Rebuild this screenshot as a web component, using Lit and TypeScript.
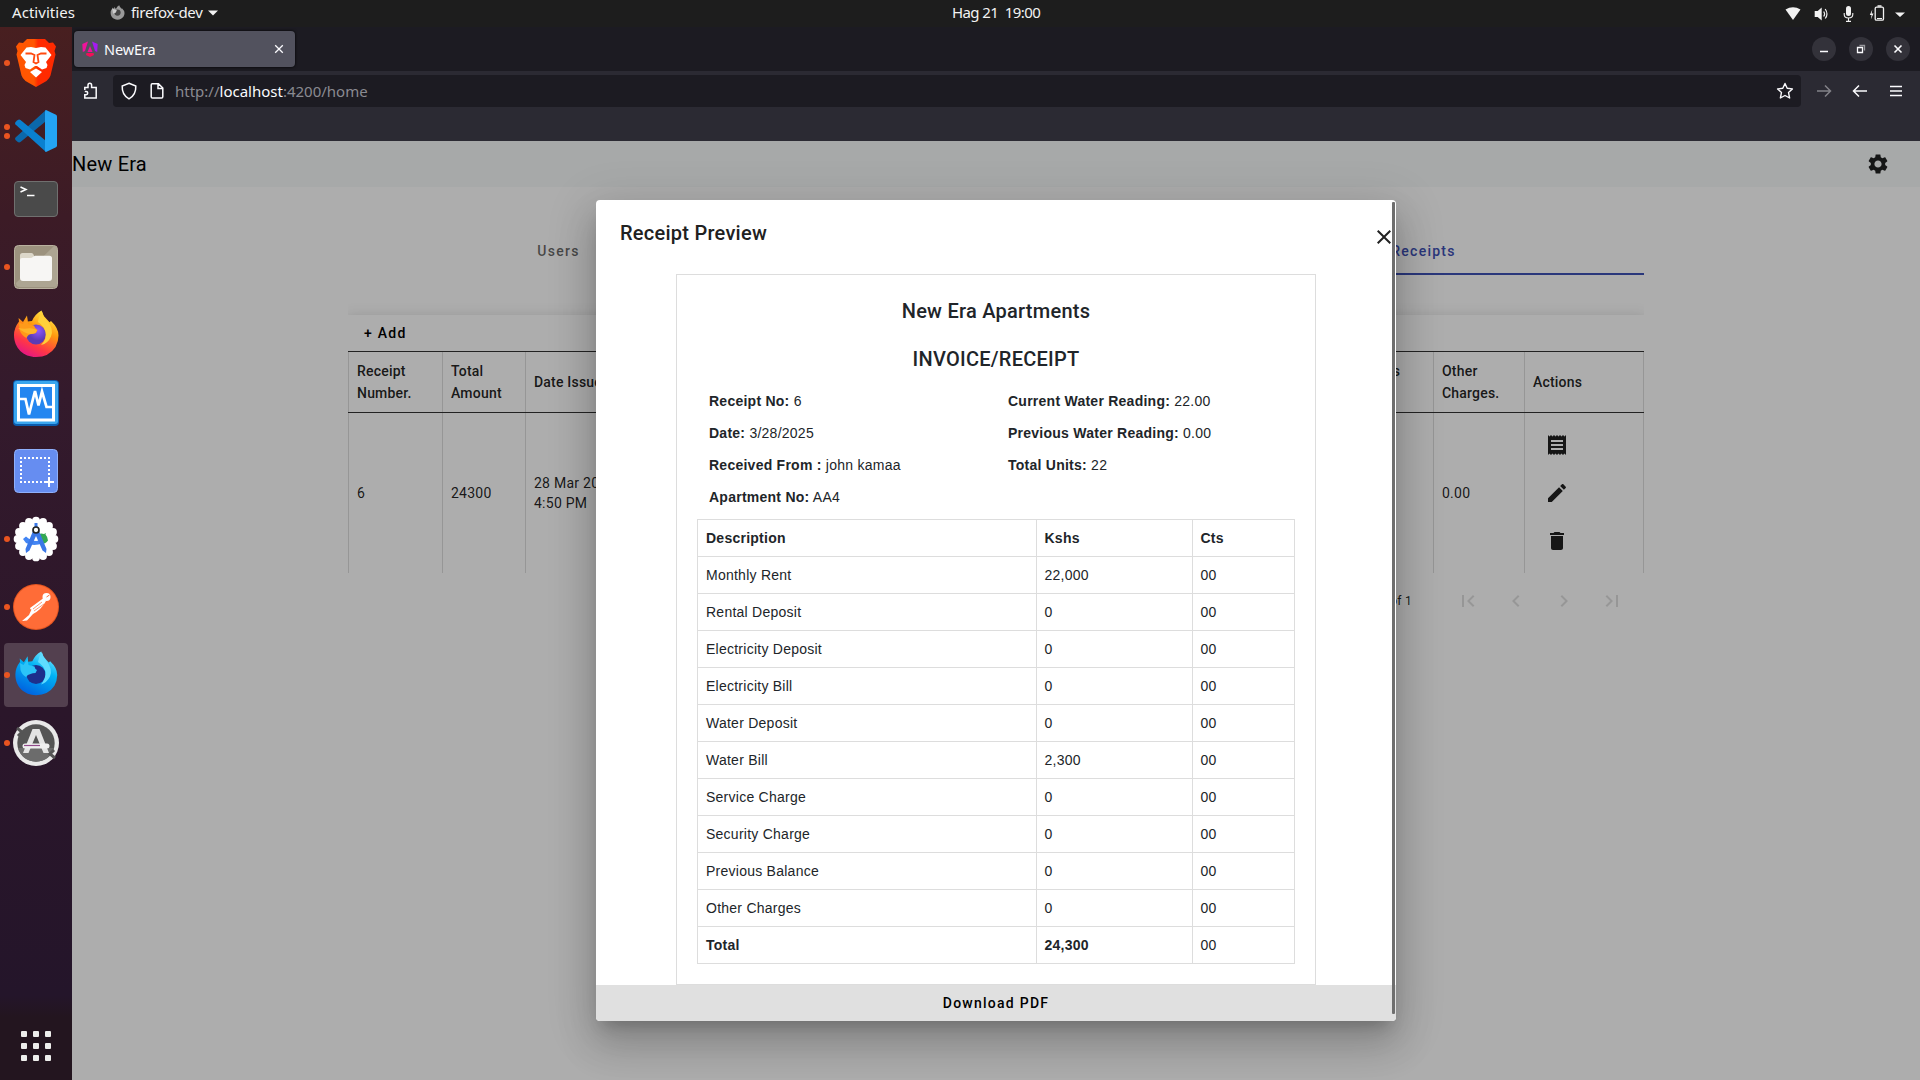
import { LitElement, html, css, svg } from "lit";
import { customElement } from "lit/decorators.js";

const ink = "#f2f2f2";

const brave = svg`<svg class="ico" viewBox="0 0 48 48">
  <defs><linearGradient id="b" x1="0" x2="1"><stop offset=".45" stop-color="#ff5601"/><stop offset=".55" stop-color="#ff2a00"/></linearGradient></defs>
  <path fill="url(#b)" d="M15 0h18l4 4 4-.5 3 4-1.500 4.500 1 3.500-5 21q-1 3-4 5.500L24 48l-10.500-6q-3-2.500-4-5.500L4.500 15.500l1-3.500L4 7.500l3-4 4 .5z"/>
  <path fill="#fff" d="M14.500 8.500 19 8l5 1 5-1 4.500.5L39.500 16l-5.500 7 1.500 3-1 3-4.500 1.500-5-3.500h-2l-5 3.500-4.500-1.500-1-3 1.500-3-5.500-7zM24 29.500l6 3.500-6 5.500-6-5.500z"/>
  <path fill="none" stroke="#ff4a10" stroke-width="1.800" d="m13.500 14.500 5.500 0 3.500 1.500-1 7 2.500 1.500 2.500-1.500-1-7 3.500-1.500h5.500"/></svg>`;

const vscode = svg`<svg class="ico" viewBox="0 0 48 48">
  <path fill="#0b68ab" d="m34 3 .1 11L8.500 35Q7 36 5.500 34.700L3.500 33q-1-1.200 0-2.500z"/>
  <path fill="#0a80cf" d="M34 45V34L8.500 13Q7 12 5.500 13.200L3.500 15q-1 1.200 0 2.500z"/>
  <path fill="#24a4f3" d="M34 3q-1 0-1 2v38q0 2 1 2l10-4.800q1-.6 1-1.800V9.600q0-1.200-1-1.800z"/></svg>`;

const terminal = svg`<svg class="ico" viewBox="0 0 48 48">
  <rect x="2.500" y="6.500" width="43" height="35" rx="3.500" fill="#4a4a4a" stroke="#70706f"/>
  <path d="m8.500 12 5.500 2.500L8.500 17M15 20.500h7.500" fill="none" stroke="#fff" stroke-width="1.500"/></svg>`;

const files = svg`<svg class="ico" viewBox="0 0 48 48">
  <rect x="2.500" y="2.500" width="43" height="43" rx="4" fill="#9c927e" stroke="#b9b19f"/>
  <path d="m4 40 38-37q3 0 3 3v35q0 3-3 3H8q-4 0-4-4z" fill="#ada592"/>
  <path d="M8 16v-3.500q0-2.500 2.500-2.500h9q1.500 0 2 1.500l1 2.500H38q2 0 2 2v4H8z" fill="#dcd7c9"/>
  <path d="M8 17q0-2 2-2h8q2 0 3.500-1.500l1.500-.7h14.500q2.500 0 2.500 2.500V35q0 3-3 3H11q-3 0-3-3z" fill="#f7f6f4"/></svg>`;

const foxPath = "M24 47C11.500 47 2 38 2 25q0-7 5-13.500l-.4-3.500L11 12l4-6.500.6 6 4.400-.5q3-7 9.500-10.500Q31 6 35 9.500l2.500 2.800 1.500-1.300q7.500 7 7.500 14.500 0 6-3 11.500Q37 47 24 47z";
const firefox = svg`<svg class="ico up" viewBox="0 0 48 48">
  <defs><linearGradient id="f" x1=".8" y1="0" x2=".3" y2="1"><stop offset="0" stop-color="#fff44f"/><stop offset=".4" stop-color="#ff980e"/><stop offset=".75" stop-color="#ff3647"/><stop offset="1" stop-color="#e31587"/></linearGradient>
  <radialGradient id="g" cx=".6" cy=".3"><stop offset="0" stop-color="#9059ff"/><stop offset="1" stop-color="#5b3bb5"/></radialGradient></defs>
  <path fill="url(#f)" d=${foxPath}/>
  <circle cx="24" cy="24.500" r="10" fill="url(#g)"/>
  <path fill="#ff9a1a" d="M7 12.500 11 14l4-7 1 7 6 1.500q1 3.500 3.500 4.500l-1.500 3q-3 1-5 1-3 .5-4.500 4Q10 26 7.500 20z"/>
  <path fill="#ffb52a" d="M6 18q6 1 9 .5 5-1 10 1.500l-1.500 3q-3 1-5 1-6-.5-12.500-6z"/>
  <path fill="#ffd13a" d="M26 12q1-7 4-10.500 1 6 6 10 6 8 3 15-3 7-10 8.500 6-6 4.500-13Q32 16 26 12z"/></svg>`;

const foxDev = svg`<svg class="ico up" viewBox="0 0 48 48">
  <defs><linearGradient id="d" x1=".8" y1="0" x2=".3" y2="1"><stop offset="0" stop-color="#80ebff"/><stop offset=".4" stop-color="#00b3f4"/><stop offset="1" stop-color="#0060df"/></linearGradient></defs>
  <path transform="translate(1.500 1) scale(.94)" fill="url(#d)" d=${foxPath}/>
  <circle cx="24" cy="24.500" r="9.500" fill="#1d2f8c"/>
  <path fill="#2bc4f8" d="M8 13 11.500 15l4-6 1 6 6 1.500q.5 3 2.500 3.500l-1.500 3q-3 0-5 1-3 .5-4.500 3Q10 25 8.500 20z"/>
  <path fill="#5fdcff" d="M26 12q1-6 4-9.500 1 5 5 9 6 8 3 15-3 6-9 8 5-6 4.500-12.500Q32 16 26 12z"/></svg>`;

const vbox = svg`<svg class="ico" viewBox="0 0 48 48">
  <rect x="1" y="1" width="46" height="46" rx="4" fill="#0a5cae"/><rect x="2" y="2" width="44" height="43" rx="3" fill="#3aa6ee"/>
  <rect x="6.500" y="6.500" width="35" height="34.500" fill="#2486f0" stroke="#fff" stroke-width="3"/>
  <path d="M8 20h5.500l3.500 15.500L23 12l3.500 14.500 3.500-14 4.500 15.500H40" fill="none" stroke="#fff" stroke-width="2.700"/></svg>`;

const shot = svg`<svg class="ico" viewBox="0 0 48 48">
  <rect x="2.500" y="2.500" width="43" height="43" rx="4" fill="#668df1" stroke="#8fb0fb"/>
  <path d="M8 11h30M9 14v22M37 14v16M12 35h20" fill="none" stroke="#fff" stroke-width="2" stroke-dasharray="2 2"/>
  <path d="M37 30v10M32 35h10" stroke="#fff" stroke-width="2"/></svg>`;

const petals = Array.from({ length: 16 }, (_, i) => {
  const a = (i / 16) * Math.PI * 2;
  return svg`<circle cx=${24 + Math.cos(a) * 18.4} cy=${24 + Math.sin(a) * 18.4} r="3.900" fill="#fff"/>`;
});
const studio = svg`<svg class="ico" viewBox="0 0 48 48">${petals}<circle cx="24" cy="24" r="19.500" fill="#fff"/>
  <path d="M28 29q6 0 8-3.500-.5-4-2.500-6l.5-1.500-2 1q-3-1-5 0z" fill="#34a853"/>
  <path d="m11 24 3-2.500q8 7 16 3l1 3.500q-9 4-17 0z" fill="#4285f4"/>
  <path d="m21 16 3-2 3 2 7.500 18-.5 4-3.500-2.500L24 21l-6.500 14.500L14 38l-.5-4z" fill="#3b78e7"/>
  <path d="M24 8v4" stroke="#3b78e7" stroke-width="3"/><circle cx="24" cy="15" r="3" fill="#fff" stroke="#222" stroke-width="1.700"/></svg>`;

const postman = svg`<svg class="ico" viewBox="0 0 48 48"><circle cx="24" cy="24" r="23" fill="#e35520"/><circle cx="24" cy="24" r="22" fill="#ff6c37"/>
  <circle cx="34.500" cy="14" r="4" fill="#fff"/><path d="m34.500 14 3-2" stroke="#ff6c37"/>
  <path d="M31 15.500 18 25q0 1.500 1.500 1.500L17 32l-7 6 5-.5 6-6.500q8-4 13-13z" fill="#fff"/>
  <path d="m30 19-9 7m11-5-10 7" stroke="#ff6c37" stroke-width=".7"/></svg>`;

const updater = svg`<svg class="ico" viewBox="0 0 48 48"><circle cx="24" cy="24" r="23" fill="#e9e9e9"/><circle cx="24" cy="24" r="18.700" fill="#555"/>
  <path d="M6 29h36q-4 13-18 13.500Q10 42 6 29z" fill="#6c6c6c"/>
  <path d="m5 9 5 4-4 4M43 39l-5-4 4-4" fill="none" stroke="#555" stroke-width="3"/>
  <path d="M20.500 10h7L37 34h-5.500L24 16l-7.500 18H11z" fill="#e4e4e4"/><rect x="10.500" y="24.500" width="27" height="5" rx="2.500" fill="#efefef"/>
  <path d="M12 26.500h16" stroke="#924a8b" stroke-width="1.200"/></svg>`;

const dock = [
  { art: brave, dots: 1 }, { art: vscode, dots: 2 }, { art: terminal, dots: 0 },
  { art: files, dots: 1 }, { art: firefox, dots: 0 }, { art: vbox, dots: 0 },
  { art: shot, dots: 0 }, { art: studio, dots: 1 }, { art: postman, dots: 1 },
  { art: foxDev, dots: 1, on: true }, { art: updater, dots: 1 },
];

const material = (d: string, cls = "") => html`<svg class="m ${cls}" viewBox="0 0 24 24"><path d=${d}></path></svg>`;
const GEAR = "M19.140 12.940c.04-.3.060-.61.060-.94 0-.32-.02-.64-.07-.94l2.030-1.580c.18-.14.230-.41.120-.61l-1.920-3.320c-.12-.22-.37-.29-.59-.22l-2.390.96c-.5-.38-1.030-.7-1.620-.94l-.36-2.540c-.04-.24-.24-.41-.48-.41h-3.840c-.24 0-.43.170-.47.410l-.36 2.540c-.59.240-1.130.570-1.620.940l-2.390-.96c-.22-.08-.47 0-.59.220L2.740 8.870c-.12.210-.08.470.120.610l2.030 1.580c-.05.300-.09.630-.09.940s.02.640.070.940l-2.030 1.580c-.18.140-.23.410-.12.610l1.920 3.320c.12.220.370.290.590.220l2.390-.96c.5.380 1.030.700 1.620.940l.36 2.540c.05.240.240.410.480.410h3.840c.24 0 .44-.17.470-.41l.36-2.540c.59-.24 1.130-.56 1.620-.94l2.390.96c.22.080.470 0 .590-.22l1.920-3.320c.12-.22.070-.47-.12-.61l-2.010-1.580zM12 15.600c-1.980 0-3.600-1.620-3.600-3.600s1.620-3.600 3.600-3.600 3.600 1.620 3.600 3.600-1.620 3.600-3.600 3.600z";
const RECEIPT = "M18 17H6v-2h12v2zm0-4H6v-2h12v2zm0-4H6V7h12v2zM3 22l1.500-1.500L6 22l1.500-1.500L9 22l1.500-1.500L12 22l1.500-1.500L15 22l1.500-1.500L18 22l1.500-1.500L21 22V2l-1.500 1.500L18 2l-1.500 1.500L15 2l-1.500 1.500L12 2l-1.500 1.500L9 2 7.500 3.500 6 2 4.500 3.500 3 2v20z";
const EDIT = "M3 17.250V21h3.750L17.810 9.940l-3.750-3.750L3 17.250zM20.710 7.040c.39-.39.390-1.020 0-1.410l-2.340-2.340c-.39-.39-1.020-.39-1.410 0l-1.830 1.830 3.750 3.750 1.830-1.830z";
const TRASH = "M6 19c0 1.100.9 2 2 2h8c1.100 0 2-.9 2-2V7H6v12zM19 4h-3.500l-1-1h-5l-1 1H5v2h14V4z";
const pagerIcons = [
  "M18.410 16.590L13.820 12l4.590-4.590L17 6l-6 6 6 6zM6 6h2v12H6z",
  "M15.410 7.410L14 6l-6 6 6 6 1.410-1.410L10.830 12z",
  "M10 6L8.590 7.410 13.170 12l-4.580 4.590L10 18l6-6z",
  "M5.590 7.410L10.180 12l-4.590 4.590L7 18l6-6-6-6zM16 6h2v12h-2z",
];

const charges: [string, string][] = [
  ["Monthly Rent", "22,000"], ["Rental Deposit", "0"], ["Electricity Deposit", "0"],
  ["Electricity Bill", "0"], ["Water Deposit", "0"], ["Water Bill", "2,300"],
  ["Service Charge", "0"], ["Security Charge", "0"], ["Previous Balance", "0"], ["Other Charges", "0"],
];

@customElement("desk-bar")
class DeskBar extends LitElement {
  static styles = css`
    :host { display: grid; grid-template-columns: 952px auto 1fr; align-items: center; height: 27px; background: #1d1d1d; color: #f2f2f2; font: 15px/25px "Noto Sans", sans-serif; }
    .left, .right { display: flex; align-items: center; }
    .left, .clock { margin-top: -2px; }
    .act { width: 98px; padding-left: 12px; letter-spacing: 0.05px; }
    .fox { width: 15px; height: 15px; margin-right: 6px; }
    .app { letter-spacing: -0.33px; width: 77px; white-space: nowrap; }
    .clock { white-space: pre; letter-spacing: -0.6px; }
    .right { justify-content: flex-end; padding-right: 15px; }
    svg { display: block; flex: none; }
  `;
  render() {
    return html`
      <div class="left"><span class="act">Activities</span>
        <svg class="fox" viewBox="0 0 48 48"><path fill="#999" d=${foxPath}></path><circle cx="24" cy="24" r="10" fill="#444"></circle><path fill="#ccc" d="M7 12l15 5-4 8-8 3z"></path></svg>
        <span class="app">firefox-dev</span><svg width="10" height="6" viewBox="0 0 10 6"><path fill=${ink} d="M0 .5h10L5 5.500z"></path></svg></div>
      <div class="clock">Hag 21  19:00</div>
      <div class="right">
        <svg width="124" height="20" viewBox="0 0 124 20" fill=${ink}>
          <path d="M4.500 5.500q7.500-4.500 15 0L12 16z"></path>
          <path d="M33 7.500h3L40 4v13l-4-3.500h-3z" transform="translate(.7 -.5)"></path>
          <path d="M42.700 7.500q1.800 2.500 0 5M44.200 5q3.500 5 0 9.500" fill="none" stroke=${ink} stroke-width="1.200"></path>
          <rect x="65" y="2" width="5" height="10" rx="2.500"></rect>
          <path d="M63.200 9v1.500q0 3.500 4.300 3.500t4.300-3.500V9M67.500 14v3M65 17.400h5" fill="none" stroke=${ink} stroke-width="1.100"></path>
          <path d="m91.300 5.500-2.500 5.500h1.800l-.8 4.500 2.700-6h-1.800z"></path>
          <rect x="94.200" y="3.200" width="8.300" height="13" rx="1.300" fill="none" stroke=${ink} stroke-width="1.300"></rect>
          <path d="M96.500 1.300h4v1.500h-4zM96 14h5v1h-5zM114 8.500h10L119 13z"></path>
        </svg>
      </div>`;
  }
}

@customElement("app-dock")
class AppDock extends LitElement {
  static styles = css`
    :host { display: flex; flex-direction: column; width: 72px; box-sizing: border-box; padding: 2px 0 19px; background: linear-gradient(#481f20, #3c1b26 18%, #341a2c 35%, #2b162a 65%, #24152a 92%, #23151f 94%); }
    .item { height: 68px; display: flex; align-items: center; justify-content: center; position: relative; }
    .item.on { height: 64px; margin: 2px 4px; border-radius: 4px; background: #53404f; }
    .ico { width: 48px; height: 48px; display: block; }
    .up { margin-bottom: 2px; }
    .dots { position: absolute; left: 4px; display: grid; gap: 3px; }
    .on .dots { left: 0; }
    .dot { width: 6px; height: 6px; border-radius: 50%; background: #e95420; }
    .grid { margin: auto auto 0; display: grid; grid-template-columns: repeat(3, 6px); gap: 6px; }
    .sq { height: 6px; border-radius: 1px; background: #eeeeec; }
  `;
  render() {
    return html`${dock.map((d) => html`<div class="item ${d.on ? "on" : ""}">
        <div class="dots">${Array.from({ length: d.dots }, () => html`<i class="dot"></i>`)}</div>${d.art}</div>`)}
      <div class="grid">${Array.from({ length: 9 }, () => html`<i class="sq"></i>`)}</div>`;
  }
}

@customElement("browser-chrome")
class BrowserChrome extends LitElement {
  static styles = css`
    :host { display: block; height: 114px; background: #2b2a33; color: #fbfbfe; font: 14.500px "Noto Sans", sans-serif; }
    .strip { height: 44px; background: #1c1b22; display: flex; align-items: center; justify-content: space-between; padding: 0 10px 0 2px; box-sizing: border-box; }
    .tab { width: 221px; height: 36px; box-sizing: border-box; border-radius: 4px; background: #52525e; box-shadow: 0 0 3px #000; display: flex; align-items: center; padding: 0 11px 0 8px; }
    .name { flex: 1; margin-left: 6px; letter-spacing: -0.1px; }
    .btns { display: flex; gap: 13px; }
    .btn { width: 24px; height: 24px; border-radius: 50%; background: #33323a; }
    svg { display: block; fill: none; stroke: #fbfbfe; stroke-width: 1.300; flex: none; }
    .bar { display: flex; align-items: center; height: 40px; }
    .puzzle { margin: 0 14px 0 9px; }
    .url { width: 1688px; height: 32px; background: #1c1b22; border-radius: 4px; display: flex; align-items: center; box-sizing: border-box; padding: 0 7px; }
    .page { margin-left: 10px; }
    .addr { flex: 1; margin-left: 9px; color: #8a8a91; font-size: 15px; letter-spacing: 0; }
    .host { color: #fbfbfe; }
    .nav { display: flex; gap: 18px; margin-left: 14px; }
    .dim { opacity: .42; }
  `;
  render() {
    return html`
      <div class="strip">
        <div class="tab">
          <svg width="16" height="16" viewBox="0 0 16 16"><g stroke="none"><path fill="#f0129b" d="M.3 3 6 .5 3 10 .8 11zM8 5l2.500 6h-5z"></path><path fill="#a519f0" d="M15.700 3 10 .5l3 9.500 2.200 1z"></path><path fill="#f01058" d="M4.500 12h7l.5 2-4 2-4-2z"></path></g></svg>
          <span class="name">NewEra</span>
          <svg width="10" height="10" viewBox="0 0 10 10"><path d="m1.200 1.200 7.600 7.600m0-7.600L1.200 8.800"></path></svg>
        </div>
        <div class="btns">
          <svg class="btn" viewBox="0 0 24 24"><path d="M8 14.500h8"></path></svg>
          <svg class="btn" viewBox="0 0 24 24"><path opacity=".5" d="M10.500 8.500h5v5"></path><path d="M8.500 10.500h5v5h-5z"></path></svg>
          <svg class="btn" viewBox="0 0 24 24"><path stroke-width="1.600" d="m8.500 8.500 7 7m0-7-7 7"></path></svg>
        </div>
      </div>
      <div class="bar">
        <svg class="puzzle" width="18" height="18" viewBox="0 0 18 18"><path stroke-width="1.500" d="M3.800 8V5.500H7V3.200q0-1.900 1.800-1.900t1.800 1.900v2.300h4.600v10.600H3.800v-3.300h1.400q1.500-.2 1.500-1.700 0-1.600-1.500-1.600H3.800"></path></svg>
        <div class="url">
          <svg width="18" height="18" viewBox="0 0 18 18"><path stroke-width="1.500" d="M9 1.300 15.800 4q.4 9-6.800 12.800Q1.800 13 2.200 4z"></path></svg>
          <svg class="page" width="18" height="18" viewBox="0 0 18 18"><path stroke-width="1.500" d="M4.200 1.700h6.300l4.300 4.300v8.800q0 1.300-1.300 1.300H4.500q-1.300 0-1.300-1.300V3q0-1.300 1-1.300zM10 2v4.500h4.500"></path></svg>
          <span class="addr">http://<span class="host">localhost</span>:4200/home</span>
          <svg width="18" height="18" viewBox="0 0 18 18"><path stroke-width="1.400" stroke-linejoin="round" d="m9 1.500 2.200 4.800 5.200.6-3.900 3.500 1.100 5.600L9 13.500 4.400 16l1.100-5.600L1.600 6.900l5.200-.6z"></path></svg>
        </div>
        <div class="nav">
          <svg class="dim" width="18" height="18" viewBox="0 0 18 18"><path stroke-width="1.500" d="M2 9h13.500M10 3.500 15.500 9 10 14.500"></path></svg>
          <svg width="18" height="18" viewBox="0 0 18 18"><path stroke-width="1.500" d="M16 9H2.500M8 3.500 2.500 9 8 14.500"></path></svg>
          <svg width="18" height="18" viewBox="0 0 18 18"><path stroke-width="1.300" d="M3 4.500h12M3 9h12M3 13.500h12"></path></svg>
        </div>
      </div>`;
  }
}

@customElement("receipts-page")
class ReceiptsPage extends LitElement {
  static styles = css`
    :host { display: block; flex: 1; background: #fff; color: rgba(0,0,0,.87); font: 14px/20px Roboto, sans-serif; letter-spacing: .25px; }
    .top { height: 46px; background: #f6f9fa; display: flex; align-items: center; justify-content: space-between; padding-right: 30px; color: #000; font-size: 20px; letter-spacing: .2px; }
    .m { width: 24px; height: 24px; fill: currentColor; display: block; }
    .top .m { color: rgba(0,0,0,.87); }
    .body { width: 1296px; margin: 40px 0 0 276px; }
    .tabs { display: grid; grid-template-columns: 421px 437px 438px; height: 48px; line-height: 48px; text-align: center; font-weight: 500; letter-spacing: 1.250px; color: rgba(0,0,0,.6); }
    .tab.on { color: #3f51b5; box-shadow: inset 0 -2px #3f51b5; padding-right: 3px; }
    .clip { overflow: hidden; padding-top: 40px; }
    .card { box-shadow: 0 5px 5px -3px rgba(0,0,0,.2), 0 8px 10px 1px rgba(0,0,0,.14), 0 3px 14px 2px rgba(0,0,0,.12); }
    .add { height: 36px; line-height: 36px; padding-left: 16px; color: #000; font-weight: 500; letter-spacing: 1.250px; }
    .row { display: grid; grid-template-columns: 94px 83px 810px 98px 91px 120px; height: 160px; }
    .row.head { height: 62px; font-weight: 500; line-height: 22px; border-top: 1px solid #333; border-bottom: 1px solid #333; box-sizing: border-box; letter-spacing: .2px; }
    .cell { display: flex; align-items: center; padding-left: 8px; border-left: 1px solid #ddd; }
    .cell:last-child { border-right: 1px solid #ddd; }
    .date { width: 100px; }
    .acts { display: grid; align-content: center; gap: 24px; padding-left: 20px; }
    .pager { height: 56px; display: flex; align-items: center; justify-content: flex-end; padding-right: 20px; font-size: 12px; }
    .picks { display: flex; gap: 24px; margin-left: 44px; color: rgba(0,0,0,.13); }
  `;
  render() {
    return html`
      <div class="top"><span>New Era</span>${material(GEAR)}</div>
      <div class="body">
        <div class="tabs"><span class="tab">Users</span><span class="tab"></span><span class="tab on">Receipts</span></div>
        <div class="clip"><div class="card">
          <div class="add">+ Add</div>
          <div class="row head">
            <div class="cell">Receipt<br>Number.</div><div class="cell">Total<br>Amount</div><div class="cell">Date Issued</div>
            <div class="cell">Previous<br>Balance</div><div class="cell">Other<br>Charges.</div><div class="cell">Actions</div>
          </div>
          <div class="row">
            <div class="cell">6</div><div class="cell">24300</div><div class="cell"><div class="date">28 Mar 2025, 4:50 PM</div></div>
            <div class="cell"></div><div class="cell">0.00</div>
            <div class="cell acts">${material(RECEIPT)}${material(EDIT)}${material(TRASH)}</div>
          </div>
          <div class="pager">1 – 1 of 1<div class="picks">${pagerIcons.map((p) => material(p))}</div></div>
        </div></div>
      </div>`;
  }
}

@customElement("receipt-dialog")
class ReceiptDialog extends LitElement {
  static styles = css`
    :host { display: flex; flex-direction: column; width: 800px; height: 821px; border-radius: 4px; overflow: hidden; background: #fff; color: #212529; position: relative; font-family: Roboto, sans-serif; box-shadow: 0 11px 15px -7px rgba(0,0,0,.2), 0 24px 38px 3px rgba(0,0,0,.14), 0 9px 46px 8px rgba(0,0,0,.12); }
    .bar { display: flex; justify-content: space-between; height: 74px; box-sizing: border-box; padding: 17px 0 0 24px; font: 500 20px/32px Roboto, sans-serif; letter-spacing: .25px; color: #212121; }
    .x { width: 24px; height: 24px; fill: #222; margin: 8px 0 0; display: block; }
    .sheet { width: 640px; height: 711px; box-sizing: border-box; margin: 0 auto; border: 1px solid #ddd; padding: 20px; font: 14px/20px "Liberation Sans", Arial, sans-serif; letter-spacing: .25px; }
    h2 { margin: 0 0 16px; font: 500 20px/32px Roboto, sans-serif; text-align: center; letter-spacing: .25px; }
    .info { display: grid; grid-template-columns: 299px 1fr; row-gap: 12px; padding-left: 12px; margin: 0 0 12px; }
    table { border-collapse: collapse; width: 598px; table-layout: fixed; }
    td, th { border: 1px solid #ddd; padding: 0 7.500px; height: 36px; text-align: left; }
    td:first-child, th:first-child { padding: 0 8px; }
    .d { width: 322px; } .k { width: 140px; }
    .dl { flex: 1; background: #e0e0e0; color: #000; display: flex; align-items: center; justify-content: center; font: 500 14px/36px Roboto, sans-serif; letter-spacing: 1.250px; }
    .thumb { position: absolute; right: 1px; top: 2px; width: 3px; height: 812px; background: #6e6e6e; border-radius: 1px; }
  `;
  render() {
    return html`
      <div class="bar"><span>Receipt Preview</span><div><svg class="x" viewBox="0 0 24 24"><path d="M19 6.410L17.590 5 12 10.590 6.410 5 5 6.410 10.590 12 5 17.590 6.410 19 12 13.410 17.590 19 19 17.590 13.410 12z"></path></svg></div></div>
      <div class="sheet">
        <h2>New Era Apartments</h2><h2>INVOICE/RECEIPT</h2>
        <div class="info">
          <span><b>Receipt No:</b> 6</span><span><b>Current Water Reading:</b> 22.00</span>
          <span><b>Date:</b> 3/28/2025</span><span><b>Previous Water Reading:</b> 0.00</span>
          <span><b>Received From :</b> john kamaa</span><span><b>Total Units:</b> 22</span>
          <span><b>Apartment No:</b> AA4</span>
        </div>
        <table>
          <tr><th class="d">Description</th><th class="k">Kshs</th><th>Cts</th></tr>
          ${charges.map(([a, b]) => html`<tr><td>${a}</td><td>${b}</td><td>00</td></tr>`)}
          <tr><td><b>Total</b></td><td><b>24,300</b></td><td>00</td></tr>
        </table>
      </div>
      <div class="dl">Download PDF</div>
      <div class="thumb"></div>`;
  }
}

@customElement("app-root")
class AppRoot extends LitElement {
  static styles = css`
    :host { display: grid; grid-template-rows: 27px 1fr; width: 1920px; height: 1080px; overflow: hidden; }
    .desk { display: grid; grid-template-columns: 72px 1fr; min-height: 0; }
    .win { display: flex; flex-direction: column; min-width: 0; }
    .view { flex: 1; position: relative; display: flex; min-height: 0; overflow: hidden; }
    .veil { position: absolute; inset: 0; display: flex; align-items: center; justify-content: center; background: rgba(0,0,0,.32); }
  `;
  render() {
    return html`<desk-bar></desk-bar>
      <div class="desk"><app-dock></app-dock>
        <div class="win"><browser-chrome></browser-chrome>
          <div class="view"><receipts-page></receipts-page><div class="veil"><receipt-dialog></receipt-dialog></div></div>
        </div>
      </div>`;
  }
}
